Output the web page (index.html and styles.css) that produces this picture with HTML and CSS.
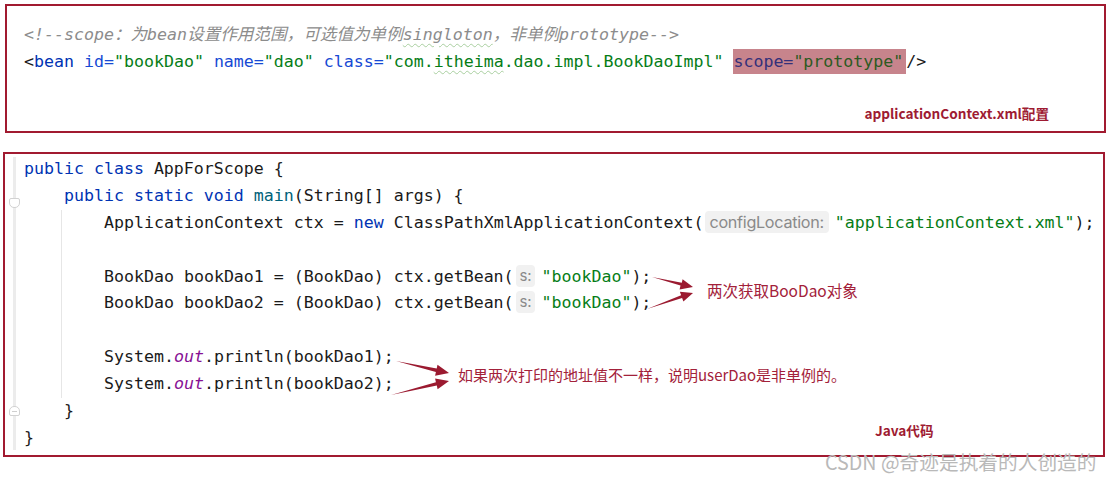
FILE: index.html
```html
<!DOCTYPE html>
<html lang="zh-CN">
<head>
<meta charset="utf-8">
<title>scope prototype</title>
<link rel="stylesheet" href="styles.css">
</head>
<body>
<div class="page">
  <section class="box xml">
    <div class="code">
      <div class="ln cm">&lt;!--scope：为bean设置作用范围，可选值为单例<span class="typo">singloton</span>，非单例prototype--&gt;</div>
      <div class="ln">&lt;<span class="tag">bean</span> <span class="attr">id=</span><span class="val">"bookDao"</span> <span class="attr">name=</span><span class="val">"dao"</span> <span class="attr">class=</span><span class="val">"com.<span class="typo">itheima</span>.dao.impl.BookDaoImpl"</span> <span class="hl"><span class="hl-attr">scope=</span><span class="hl-val">"prototype"</span></span>/&gt;</div>
    </div>
    <div class="caption">applicationContext.xml配置</div>
  </section>

  <section class="box java">
    <div class="gutter">
      <span class="fold fold-open"></span>
      <span class="fold fold-close"></span>
    </div>
    <div class="code">
      <div class="ln"><span class="kw">public class</span> AppForScope {</div>
      <div class="ln">    <span class="kw">public static void</span> <span class="fn">main</span>(String[] args) {</div>
      <div class="body">
        <div class="ln">ApplicationContext ctx = <span class="kw">new</span> ClassPathXmlApplicationContext(<span class="hint hint-long">configLocation:</span><span class="str">"applicationContext.xml"</span>);</div>
        <div class="ln"> </div>
        <div class="ln">BookDao bookDao1 = (BookDao) ctx.getBean(<span class="hint">s:</span><span class="str">"bookDao"</span>);</div>
        <div class="ln">BookDao bookDao2 = (BookDao) ctx.getBean(<span class="hint">s:</span><span class="str">"bookDao"</span>);</div>
        <div class="ln"> </div>
        <div class="ln">System.<span class="fld">out</span>.println(bookDao1);</div>
        <div class="ln">System.<span class="fld">out</span>.println(bookDao2);</div>
      </div>
      <div class="ln">    }</div>
      <div class="ln">}</div>
    </div>

    <svg class="arrows" width="1098" height="301" viewBox="0 0 1098 301" aria-hidden="true">
      <polygon points="647,123 675.5,131.6 674.6,135.4 688,133 677.6,125.2 676.8,128.8"/>
      <polygon points="642,155 677.1,144.1 678.4,147.6 688,139 674.9,137.8 676.1,141.3"/>
      <polygon points="391,207 430.9,218 430.1,221.8 444,219 432.5,210.8 431.7,214.6"/>
      <polygon points="386,241 431.8,231.5 432.6,235.3 444,227 430.1,224.5 430.9,228.2"/>
    </svg>
    <div class="note note-get">两次获取BooDao对象</div>
    <div class="note note-print">如果两次打印的地址值不一样，说明userDao是非单例的。</div>
    <div class="caption caption-java">Java代码</div>
  </section>

  <div class="watermark">CSDN @奇迹是执着的人创造的</div>
</div>
</body>
</html>
```

FILE: styles.css
```css
* { box-sizing: border-box; }
html, body { margin: 0; padding: 0; background: #fff; }

.page {
  position: relative;
  width: 1110px;
  height: 482px;
  padding-top: 4px;
  overflow: hidden;
}

.box {
  position: relative;
  border: 2px solid #a11a30;
  background: #fff;
}

.code {
  font-family: "DejaVu Sans Mono", "Noto Sans CJK SC", monospace;
  font-size: 16.6px;
  color: #1a1a1a;
}
.ln { white-space: pre; }

/* ---------- XML box ---------- */
.xml {
  margin: 0 4px 0 5px;
  height: 129px;
  padding: 15px 55px 0 17px;
  display: flex;
  flex-direction: column;
}
.xml .ln { height: 27px; line-height: 27px; }
.cm { color: #8c8c8c; font-style: italic; }
.typo {
  text-decoration: underline wavy #a9cfa0;
  text-decoration-thickness: 1px;
  text-underline-offset: 3px;
}
.tag { color: #0033b3; }
.attr { color: #174ad4; }
.val { color: #067d17; }
.hl {
  background: #c7848c;
  padding: 3px 3px 3px 0;
}
.hl-attr { color: #34307a; }
.hl-val { color: #2c5a22; }

.caption {
  align-self: flex-end;
  margin-top: 29px;
  font: bold 13.6px/18px "Noto Sans CJK SC", "Noto Sans", sans-serif;
  color: #9e1b32;
}

/* ---------- Java box ---------- */
.java {
  margin: 19px 5px 0 3px;
  height: 305px;
  display: flex;
  align-items: flex-start;
}
.gutter {
  position: relative;
  flex: none;
  width: 3px;
  height: 293px;
  margin: 3px 8px 0 8px;
  background: #ececec;
}
.fold {
  position: absolute;
  left: -4px;
  width: 11px;
  height: 10px;
  background: #fff;
  border: 1px solid #d2d2d2;
}
.fold-open {
  top: 41px;
  border-radius: 2px 2px 5px 5px;
}
.fold-close {
  top: 249px;
  border-radius: 5px 5px 2px 2px;
}
.fold-close::after {
  content: "";
  position: absolute;
  left: 2px;
  right: 2px;
  top: 4px;
  height: 1px;
  background: #cfcfcf;
}

.java .code { padding-top: 2px; }
.java .ln { height: 26.9px; line-height: 26.9px; }
.body {
  margin-left: 37px;
  padding-left: 42px;
  border-left: 1px solid #e6e6e6;
}
.kw { color: #0033b3; }
.fn { color: #00627a; }
.str { color: #067d17; }
.fld { color: #871094; font-style: italic; }

.hint {
  display: inline-block;
  vertical-align: middle;
  margin: -3px 6px 0 2px;
  padding: 0 4px;
  height: 22px;
  line-height: 22px;
  border-radius: 4px;
  background: #f1f1f1;
  color: #8a8a8a;
  font-family: Inter, "Noto Sans", sans-serif;
  font-size: 15px;
  letter-spacing: -0.2px;
}
.hint-long { font-size: 16.2px; letter-spacing: -0.3px; padding: 0 5px 0 4px; }

.arrows {
  position: absolute;
  left: 0;
  top: 0;
  fill: #9b1a30;
  pointer-events: none;
}

.note {
  position: absolute;
  font: 15px/20px "Noto Sans CJK SC", "Noto Sans", sans-serif;
  color: #a3213a;
  white-space: nowrap;
}
.note-get { left: 702px; top: 126px; font-size: 15.5px; }
.note-print { left: 453px; top: 211px; }

.caption-java {
  position: absolute;
  left: 870px;
  top: 267px;
  margin: 0;
}

.watermark {
  position: absolute;
  left: 825px;
  top: 449px;
  font: 19.7px/26px "Noto Sans CJK SC", "Noto Sans", sans-serif;
  color: #b9b9b9;
  white-space: nowrap;
}
```
